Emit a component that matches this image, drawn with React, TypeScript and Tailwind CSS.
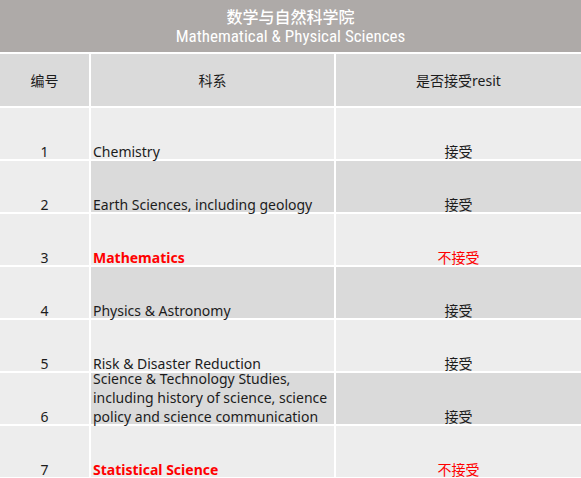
const rows = [
  { no: '1', name: ['Chemistry'], ok: true },
  { no: '2', name: ['Earth Sciences, including geology'], ok: true },
  { no: '3', name: ['Mathematics'], ok: false },
  { no: '4', name: ['Physics & Astronomy'], ok: true },
  { no: '5', name: ['Risk & Disaster Reduction'], ok: true },
  {
    no: '6',
    name: ['Science & Technology Studies,', 'including history of science, science', 'policy and science communication'],
    ok: true,
  },
  { no: '7', name: ['Statistical Science'], ok: false },
]

export default function App() {
  return (
    <div
      className="w-[581px] h-[478px] overflow-hidden bg-white text-[14px] leading-[19px] text-[#1c1c1c]"
      style={{ fontFamily: '"Noto Sans", "Noto Sans CJK SC", sans-serif' }}
    >
      <div className="grid grid-cols-[89px_243px_1fr] gap-x-[2px] gap-y-[2px] grid-rows-[52px_52px_repeat(7,51px)]">
        {/* title */}
        <div className="col-span-3 bg-[#aeaaa8] flex flex-col items-center justify-center gap-[1px] text-white pt-[1px]">
          <div className="text-[16px] leading-[19px] font-medium" style={{ fontFamily: '"Noto Sans CJK SC", sans-serif' }}>
            数学与自然科学院
          </div>
          <div
            className="text-[17px] leading-[19px]"
            style={{ fontFamily: '"Liberation Sans Narrow", "Roboto Condensed", "Liberation Sans", sans-serif' }}
          >
            Mathematical &amp; Physical Sciences
          </div>
        </div>

        {/* header */}
        <div className="bg-[#dadada] flex items-center justify-center">编号</div>
        <div className="bg-[#dadada] flex items-center justify-center">科系</div>
        <div className="bg-[#dadada] flex items-center justify-center">是否接受resit</div>

        {rows.map((r, i) => {
          const shade = i % 2 === 1 ? 'bg-[#dadada]' : 'bg-[#ededed]'
          const red = !r.ok
          return (
            <div key={r.no} className="contents">
              <div className="bg-[#ededed] flex items-end justify-center">
                <span className="-mb-[2px]">{r.no}</span>
              </div>
              <div
                className={`${shade} flex flex-col justify-end pl-[2px] whitespace-nowrap ${
                  red ? 'text-[#ff0000] font-bold' : ''
                }`}
              >
                <div className="-mb-[2px]">
                  {r.name.map((l) => (
                    <div key={l}>{l}</div>
                  ))}
                </div>
              </div>
              <div className={`${shade} flex items-end justify-center ${red ? 'text-[#ff0000]' : ''}`}>
                <span className="-mb-[2px]">{r.ok ? '接受' : '不接受'}</span>
              </div>
            </div>
          )
        })}
      </div>
    </div>
  )
}
